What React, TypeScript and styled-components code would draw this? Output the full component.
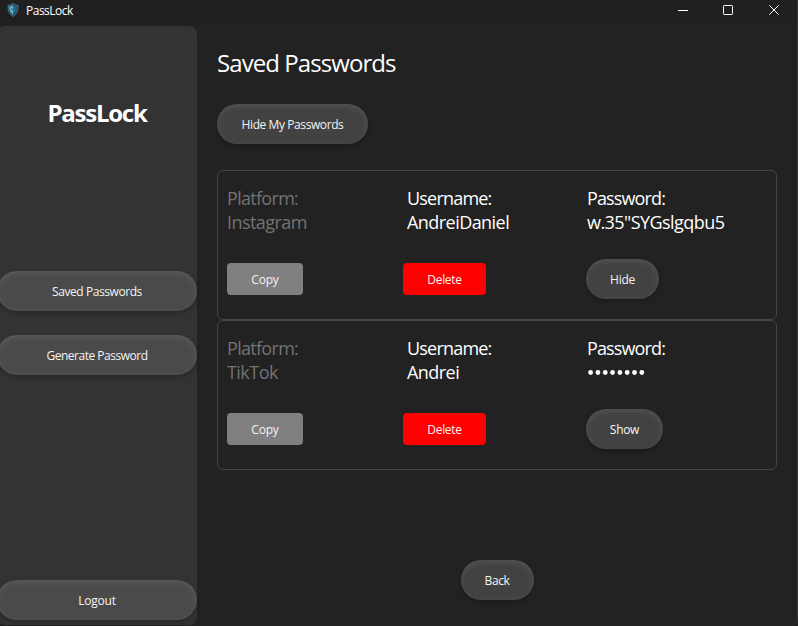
import React from "react";
import styled, { createGlobalStyle, css } from "styled-components";

const GlobalStyle = createGlobalStyle`
  * { box-sizing: border-box; }
  body { margin: 0; background: #222; overflow: hidden; }
  button { font: inherit; }
`;

const Window = styled.div`
  width: 798px;
  height: 626px;
  display: flex;
  flex-direction: column;
  overflow: hidden;
  background: #222;
  border-right: 1px solid #363636;
  border-bottom-right-radius: 8px;
  color: #fff;
  font-family: "Open Sans", "Noto Sans", sans-serif;
`;

const TitleBar = styled.header`
  height: 26px;
  flex: none;
  display: flex;
  align-items: flex-start;
  background: #202020;
`;

const AppIcon = styled.svg`
  width: 12px;
  height: 14px;
  margin: 3px 0 0 7px;
`;

const AppName = styled.span`
  margin: 3px 0 0 7px;
  flex: 1;
  font-size: 12px;
  line-height: 16px;
  letter-spacing: -0.5px;
`;

const WindowControls = styled.svg`
  width: 120px;
  height: 20px;
`;

const Body = styled.div`
  flex: 1;
  display: flex;
`;

const Sidebar = styled.nav`
  width: 200px;
  height: 599px;
  margin-left: -3px;
  display: flex;
  flex-direction: column;
  background: #333;
  border-radius: 8px;
`;

const Brand = styled.h1`
  margin: 70px 0 142px;
  text-align: center;
  font-size: 24px;
  line-height: 33px;
  font-weight: 700;
  letter-spacing: -1.25px;
`;

const Links = styled.div`
  display: flex;
  flex-direction: column;
  gap: 24px;
  flex: 1;
`;

const buttonText = css<{ $tracking?: number }>`
  border: 0;
  padding: 2px 0 0;
  color: #f4f4f4;
  font-size: 12px;
  line-height: 16px;
  letter-spacing: ${(p) => p.$tracking ?? -0.3}px;
  white-space: nowrap;
`;

const PillButton = styled.button<{ $width: number; $tone?: string; $tracking?: number }>`
  ${buttonText}
  width: ${(p) => p.$width}px;
  height: 40px;
  border-radius: 20px;
  background: ${(p) => p.$tone ?? "#424242"};
  box-shadow: 0 2px 4px rgba(0, 0, 0, 0.25), inset 0 2px 6px rgba(255, 255, 255, 0.1);
`;

const LogoutButton = styled(PillButton)`
  margin-bottom: 5px;
`;

const FlatButton = styled.button<{ $width: number; $color: string; $tracking?: number }>`
  ${buttonText}
  width: ${(p) => p.$width}px;
  height: 32px;
  border-radius: 4px;
  background: ${(p) => p.$color};
`;

const Main = styled.main`
  width: 560px;
  margin-left: 20px;
  display: flex;
  flex-direction: column;
  align-items: flex-start;
`;

const Heading = styled.h2`
  margin: 20px 0 25px;
  font-size: 24px;
  line-height: 33px;
  font-weight: 400;
  letter-spacing: -0.93px;
`;

const List = styled.section`
  width: 560px;
  margin: 26px 0 90px;
`;

const Card = styled.article`
  height: 150px;
  padding: 15px 9px 0;
  border: 1px solid #444;
  border-radius: 6px;
`;

const Fields = styled.div`
  display: grid;
  grid-template-columns: 180px 180px 180px;
  height: 73px;
`;

const Field = styled.div<{ $muted?: boolean }>`
  color: ${(p) => (p.$muted ? "#737373" : "#fff")};
  font-size: 18px;
  line-height: 24px;
`;

const Label = styled.div<{ $tracking?: number }>`
  letter-spacing: ${(p) => p.$tracking ?? -0.8}px;
  white-space: nowrap;
`;

const Value = styled.div`
  letter-spacing: -0.55px;
  white-space: nowrap;
`;

const Mask = styled.svg`
  display: block;
  width: 60px;
  height: 24px;
`;

const Actions = styled.div`
  display: grid;
  grid-template-columns: 176px 183px auto;
  align-items: center;
  height: 40px;
`;

const BackRow = styled.div`
  width: 100%;
  display: flex;
  justify-content: center;
`;

type Entry = { platform: string; username: string; password?: string };

const entries: Entry[] = [
  { platform: "Instagram", username: "AndreiDaniel", password: 'w.35"SYGslgqbu5' },
  { platform: "TikTok", username: "Andrei" },
];

function PasswordCard({ platform, username, password }: Entry) {
  return (
    <Card>
      <Fields>
        <Field $muted>
          <Label $tracking={-0.7}>Platform:</Label>
          <Value>{platform}</Value>
        </Field>
        <Field>
          <Label>Username:</Label>
          <Value>{username}</Value>
        </Field>
        <Field>
          <Label $tracking={-0.87}>Password:</Label>
          {password ? (
            <Value>{password}</Value>
          ) : (
            <Mask viewBox="0 0 60 24" fill="#fff" aria-label="Hidden password">
              {[0, 1, 2, 3, 4, 5, 6, 7].map((i) => (
                <circle key={i} cx={3.6 + i * 7.32} cy={12.5} r={2.4} />
              ))}
            </Mask>
          )}
        </Field>
      </Fields>
      <Actions>
        <FlatButton $width={76} $color="#808080" $tracking={-0.2}>Copy</FlatButton>
        <FlatButton $width={83} $color="#ff0000">Delete</FlatButton>
        <PillButton $width={password ? 73 : 77}>{password ? "Hide" : "Show"}</PillButton>
      </Actions>
    </Card>
  );
}

export default function App() {
  return (
    <>
      <GlobalStyle />
      <Window>
        <TitleBar>
          <AppIcon viewBox="0 0 12 14">
            <path d="M6 .4C7.5 1.5 9 2 11 2.2c.3 5-.8 8.7-5 11.4C1.8 10.9.7 7.2 1 2.2 3 2 4.5 1.5 6 .4Z" fill="#235668" stroke="#60747e" strokeWidth=".7" />
            <path d="M6 2v9.8C3.3 9.7 2.2 7 2.3 3.5 4 3.2 5 2.7 6 2Z" fill="#5eafc8" />
            <path d="M6 4.5 8.5 4 8 8 6 10Z" fill="#397f99" />
            <path d="m4.5 6 1.5 1 1.5-2" fill="none" stroke="#163543" strokeWidth=".8" />
          </AppIcon>
          <AppName>PassLock</AppName>
          <WindowControls viewBox="0 0 120 20" fill="none" stroke="#fff">
            <path d="M1 10.5h10" />
            <rect x="46.5" y="5.5" width="9" height="9" rx=".8" />
            <path d="m92.300 5.300 9.400 9.400m0-9.400-9.400 9.400" />
          </WindowControls>
        </TitleBar>
        <Body>
          <Sidebar>
            <Brand>PassLock</Brand>
            <Links>
              <PillButton $width={200} $tone="#4a4a4a" $tracking={-0.43}>Saved Passwords</PillButton>
              <PillButton $width={200} $tone="#4a4a4a" $tracking={-0.48}>Generate Password</PillButton>
            </Links>
            <LogoutButton $width={200} $tone="#4a4a4a" $tracking={-0.2}>Logout</LogoutButton>
          </Sidebar>
          <Main>
            <Heading>Saved Passwords</Heading>
            <PillButton $width={151} $tracking={-0.41}>Hide My Passwords</PillButton>
            <List>
              {entries.map((entry) => (
                <PasswordCard key={entry.platform} {...entry} />
              ))}
            </List>
            <BackRow>
              <PillButton $width={73} $tracking={-0.4}>Back</PillButton>
            </BackRow>
          </Main>
        </Body>
      </Window>
    </>
  );
}
